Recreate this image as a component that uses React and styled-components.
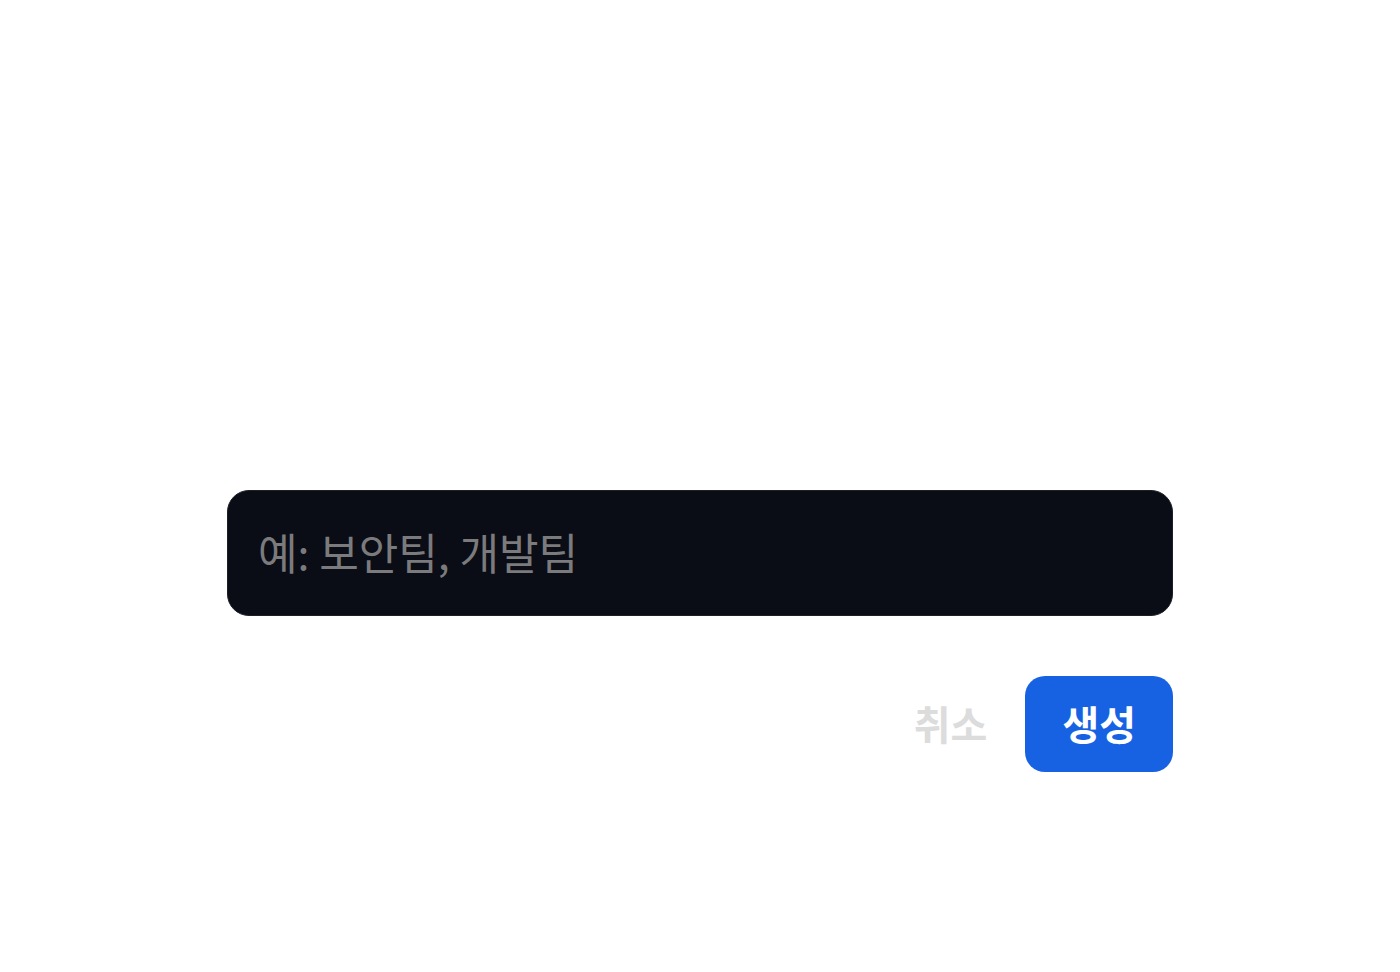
import React from 'react'
import styled, { createGlobalStyle } from 'styled-components'

const Global = createGlobalStyle`
  html, body {
    margin: 0;
    padding: 0;
    background: #ffffff;
    font-family: 'Noto Sans CJK KR', 'Noto Sans', sans-serif;
  }
`

// Page area
const Page = styled.div`
  min-height: 972px;
  box-sizing: border-box;
  padding-top: 490px;
  display: flex;
  justify-content: center;
`

const Form = styled.div`
  width: 946px;
  display: flex;
  flex-direction: column;
  gap: 60px;
`

// Team name field
const Input = styled.input`
  box-sizing: border-box;
  width: 100%;
  height: 126px;
  padding: 0 0 4px 30px;
  border: 1px solid #1c1f26;
  border-radius: 22px;
  background: #0a0d15;
  color: #e5e7eb;
  font-family: inherit;
  font-size: 43px;
  font-weight: 400;
  outline: none;

  &::placeholder {
    color: #7b7b7d;
  }
`

const Actions = styled.div`
  display: flex;
  justify-content: flex-end;
  align-items: center;
  gap: 38px;
`

const Button = styled.button`
  font-family: inherit;
  font-size: 40px;
  font-weight: 700;
  border: none;
  cursor: pointer;
  line-height: 1;
  height: 96px;
  border-radius: 20px;
  padding: ${p => (p.$primary ? '0 37px 2px' : '0 0 2px')};
  background: ${p => (p.$primary ? '#1662e3' : 'transparent')};
  color: ${p => (p.$primary ? '#ffffff' : '#dcdcdc')};
`

export default function App() {
  return (
    <>
      <Global />
      <Page>
        <Form>
          <Input placeholder="예: 보안팀, 개발팀" />
          <Actions>
            <Button>취소</Button>
            <Button $primary>생성</Button>
          </Actions>
        </Form>
      </Page>
    </>
  )
}
